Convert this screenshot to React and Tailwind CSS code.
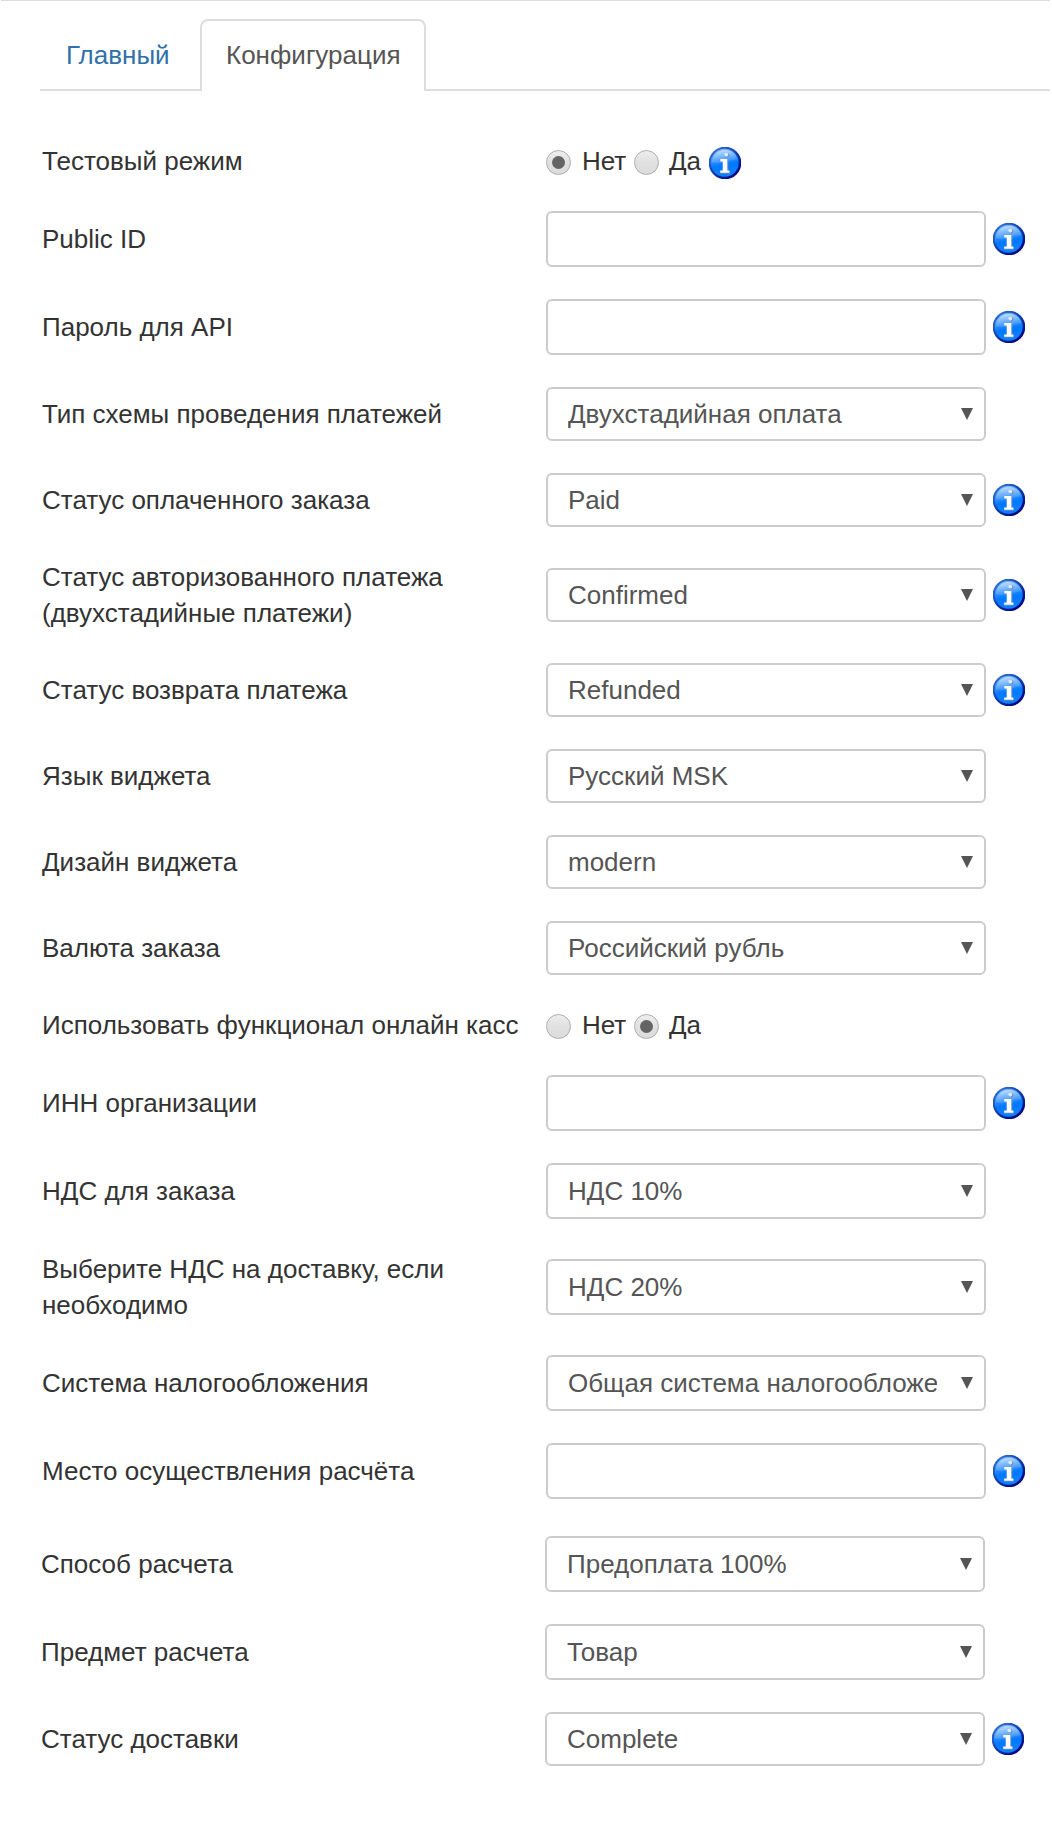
import React from "react";

function InfoIcon({ className = "" }) {
  return (
    <svg width="32" height="32" viewBox="0 0 32 32" className={"shrink-0 " + className}>
      <defs>
        <linearGradient id="info-rim" x1="0.15" y1="0.1" x2="0.85" y2="0.9">
          <stop offset="0" stopColor="#2e6bd0" />
          <stop offset="0.5" stopColor="#0f3cae" />
          <stop offset="1" stopColor="#00007c" />
        </linearGradient>
        <linearGradient id="info-face" x1="0.3" y1="0" x2="0.5" y2="1">
          <stop offset="0" stopColor="#7db9f8" />
          <stop offset="0.4" stopColor="#3390fa" />
          <stop offset="0.6" stopColor="#0078ff" />
          <stop offset="1" stopColor="#1280ff" />
        </linearGradient>
        <linearGradient id="info-gloss" x1="0.2" y1="0" x2="0.5" y2="1">
          <stop offset="0" stopColor="#d4eaff" stopOpacity="0.85" />
          <stop offset="1" stopColor="#7fbcff" stopOpacity="0.15" />
        </linearGradient>
        <clipPath id="info-clip">
          <rect width="32" height="32" />
        </clipPath>
        <filter id="info-soft" x="-10%" y="-10%" width="120%" height="120%">
          <feGaussianBlur stdDeviation="0.6" />
        </filter>
      </defs>
      <g clipPath="url(#info-clip)">
        <g filter="url(#info-soft)">
          <circle cx="16" cy="16" r="16.3" fill="url(#info-rim)" />
          <circle cx="15.7" cy="15.8" r="14" fill="url(#info-face)" />
          <path d="M3 15.500C3 8 8.500 3 15.500 3S27.500 7 28 12.500C22 12 16 17.500 3 15.500Z" fill="url(#info-gloss)" />
          <g fill="#6d8fc0" opacity="0.8">
            <circle cx="18.200" cy="8.200" r="2.300" />
            <path d="M12 12.500h7.400v11.500h1.800v2.800h-10.200v-2.500h3v-9.100h-2z" />
          </g>
          <circle cx="17.300" cy="7.600" r="1.900" fill="#dfeaf8" />
          <path d="M11.300 12h7v11.600h2v2.200h-9.100v-2.200h2.500v-9h-2.400z" fill="#fbfcff" />
        </g>
      </g>
    </svg>
  );
}

function Radio({ checked }) {
  return (
    <span className="mt-[3px] flex size-[25px] shrink-0 items-center justify-center rounded-full border border-[#adadad] bg-linear-to-b from-[#eeeeee] via-[#e0e0e0] to-[#dcdcdc]">
      {checked && <span className="size-[13px] rounded-full bg-[#646464]" />}
    </span>
  );
}

function RadioGroup({ value, info }) {
  return (
    <div className="flex h-9 items-center">
      <Radio checked={value === "no"} />
      <span className="ml-[11px] w-[52px]">Нет</span>
      <Radio checked={value === "yes"} />
      <span className="ml-[10px] w-[40px]">Да</span>
      {info && <InfoIcon className="mt-1" />}
    </div>
  );
}

function Field({ kind, value, info }) {
  return (
    <div className="flex items-center">
      <div
        className={
          "flex w-[440px] shrink-0 items-center rounded-[6px] border-2 border-[#cccccc] bg-white pl-5 pr-[11px] text-[#555555] " +
          (kind === "short" ? "h-[54px]" : "h-14")
        }
      >
        {kind !== "input" && (
          <>
            <span className="w-[369px] overflow-hidden whitespace-nowrap">{value}</span>
            <svg width="12" height="12" viewBox="0 0 12 12" className="ml-auto shrink-0">
              <path d="M0 0H12L6 12Z" fill="#555555" />
            </svg>
          </>
        )}
      </div>
      {info && <InfoIcon className="ml-[7px]" />}
    </div>
  );
}

function Row({ label, children }) {
  return (
    <div className="grid grid-cols-[504px_1fr] items-center py-4">
      <div className="whitespace-pre-line">{label}</div>
      {children}
    </div>
  );
}

const payment = [
  { label: "Public ID", kind: "input", info: true },
  { label: "Пароль для API", kind: "input", info: true },
  { label: "Тип схемы проведения платежей", kind: "short", value: "Двухстадийная оплата" },
  { label: "Статус оплаченного заказа", kind: "short", value: "Paid", info: true },
  { label: "Статус авторизованного платежа\n(двухстадийные платежи)", kind: "short", value: "Confirmed", info: true },
  { label: "Статус возврата платежа", kind: "short", value: "Refunded", info: true },
  { label: "Язык виджета", kind: "short", value: "Русский MSK" },
  { label: "Дизайн виджета", kind: "short", value: "modern" },
  { label: "Валюта заказа", kind: "short", value: "Российский рубль" },
];

const receipts = [
  { label: "ИНН организации", kind: "input", info: true },
  { label: "НДС для заказа", kind: "tall", value: "НДС 10%" },
  { label: "Выберите НДС на доставку, если\nнеобходимо", kind: "tall", value: "НДС 20%" },
  { label: "Система налогообложения", kind: "tall", value: "Общая система налогообложе" },
  { label: "Место осуществления расчёта", kind: "input", info: true },
];

const delivery = [
  { label: "Способ расчета", kind: "tall", value: "Предоплата 100%" },
  { label: "Предмет расчета", kind: "tall", value: "Товар" },
  { label: "Статус доставки", kind: "short", value: "Complete", info: true },
];

const renderRow = (row) => (
  <Row key={row.label} label={row.label}>
    <Field kind={row.kind} value={row.value} info={row.info} />
  </Row>
);

export default function App() {
  return (
    <div className="h-[1847px] w-[1052px] overflow-hidden bg-white pr-[2px] font-['Liberation_Sans',Arial,sans-serif] text-[26px] leading-9 text-[#333333]">
      <div className="ml-px h-px bg-[#dddddd]" />
      <nav className="ml-10 mt-[18px] flex h-[72px] border-b-2 border-[#dddddd]">
        <div className="w-[160px] pl-[26px] pt-[18px] text-[#3071a9]">Главный</div>
        <div className="h-[72px] w-[226px] rounded-t-[8px] border-2 border-b-0 border-[#dddddd] bg-white pl-6 pt-4 text-[#555555]">
          Конфигурация
        </div>
      </nav>
      <main className="pl-[42px] pt-9">
        <Row label="Тестовый режим">
          <RadioGroup value="no" info />
        </Row>
        {payment.map(renderRow)}
        <Row label="Использовать функционал онлайн касс">
          <RadioGroup value="yes" />
        </Row>
        {receipts.map(renderRow)}
        <section className="-ml-px mt-[5px]">{delivery.map(renderRow)}</section>
      </main>
    </div>
  );
}
